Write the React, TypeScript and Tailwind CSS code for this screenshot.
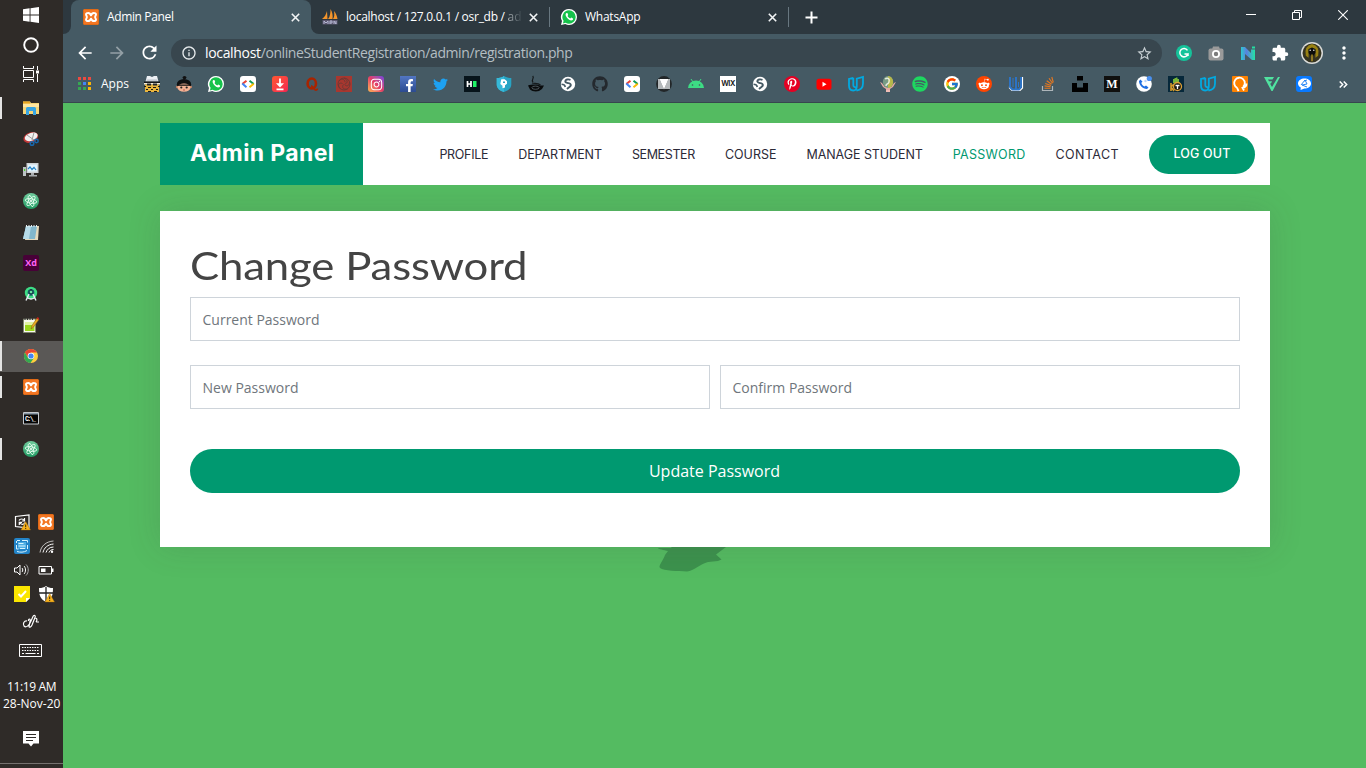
import React, { useLayoutEffect, useRef, useState } from "react";
import {
  FaWhatsapp, FaInstagram, FaFacebookF, FaTwitter, FaGithub,
  FaPinterestP, FaSpotify, FaRedditAlien,
} from "react-icons/fa";
import { FcGoogle } from "react-icons/fc";
import { MdArrowBack, MdArrowForward, MdRefresh, MdInfoOutline, MdStarBorder, MdExtension, MdMoreVert } from "react-icons/md";

/* One line of text whose tracking is adjusted so that it fills a given width. */
function Line({ w, className = "", children }: { w: number; className?: string; children: string }) {
  const ref = useRef<HTMLSpanElement>(null);
  const [spacing, setSpacing] = useState(0);
  useLayoutEffect(() => {
    const el = ref.current;
    if (!el) return;
    el.style.letterSpacing = "0px";
    const natural = el.offsetWidth;
    const next = (w - natural) / children.length;
    el.style.letterSpacing = next + "px";
    setSpacing(next);
  }, [w, children]);
  return (
    <span ref={ref} className={"inline-block shrink-0 whitespace-pre " + className} style={{ letterSpacing: spacing }}>
      {children}
    </span>
  );
}

const ui = "font-['Open_Sans','Noto_Sans',sans-serif]";
const brand = "font-['Inter','Open_Sans',sans-serif]";

function Svg({ children, s = 16 }: { children: React.ReactNode; s?: number }) {
  return <svg width={s} height={s} viewBox="0 0 16 16" className="block shrink-0 overflow-visible">{children}</svg>;
}

function Tile({ className, children }: { className: string; children?: React.ReactNode }) {
  return <span className={"flex h-4 w-4 shrink-0 items-center justify-center overflow-hidden " + className}>{children}</span>;
}

const Xampp = () => (
  <Tile className="rounded-[2px] bg-[#f37623] text-white"><Svg>
    <rect x=".5" y=".5" width="15" height="15" rx="1" fill="none" stroke="#e06a16" />
    <path d="M8 6.300C7.300 4.300 6 3.800 4.800 3.900 3 4 2.600 5.500 3.500 6.800c.5.8.5 1.600 0 2.400C2.600 10.500 3 12 4.800 12.100 6 12.200 7.300 11.700 8 9.700c.7 2 2 2.500 3.200 2.400 1.800-.1 2.200-1.600 1.300-2.900-.5-.8-.5-1.600 0-2.400.9-1.300.5-2.800-1.300-2.900C10 3.800 8.700 4.300 8 6.300z" fill="none" stroke="currentColor" strokeWidth="2" strokeLinejoin="round" />
  </Svg></Tile>
);

const WhatsApp = () => (
  <span className="relative block h-4 w-4">
    <Svg>
      <path d="M8 0a8 8 0 0 1 0 16 8 8 0 0 1-3.700-.9L0 16l1-4A8 8 0 0 1 8 0z" fill="#fff" />
      <path d="M8 1.300a6.700 6.700 0 0 1 0 13.400 6.700 6.700 0 0 1-3.400-.9l-2.700.6.7-2.600A6.700 6.700 0 0 1 8 1.300z" fill="#16c24b" />
      <path d="M5.500 4c-1.300.6-1.200 2.500.3 4.400 1.700 2.200 4 3.500 5.300 2.900 1-.5 1.200-1.700.9-1.900l-1.800-.9-.9 1c-1.200-.4-2.200-1.300-2.800-2.500l.7-1L6.400 4z" fill="#fff" />
    </Svg>
  </span>
);

const Code = () => (
  <Tile className="rounded-[3px] bg-white"><Svg>
    <path d="M6.500 4.700 2.300 8" stroke="#ea4335" strokeWidth="2" /><path d="M2.300 7.500l4.200 3.700" stroke="#4285f4" strokeWidth="2" />
    <path d="M9.500 4.700 13.700 8" stroke="#0f9d58" strokeWidth="2" /><path d="M13.700 7.700 9.500 11.200" stroke="#fbbc05" strokeWidth="2" />
  </Svg></Tile>
);

const Globe = () => (
  <Svg>
    <circle cx="8" cy="8" r="7.200" fill="#fff" />
    <path d="M10.500 3.800C8 2.800 5.500 3.500 5.300 5.200c-.1 1.300 1.700 1.600 3.200 2 1.800.5 2.700 1.300 2.200 2.500-.5 1.300-2.200 1.800-3.700 3.300" stroke="#455a64" strokeWidth="1.900" fill="none" />
    <path d="M1.500 8.300c2 0 3.500 1 3.800 2.700" stroke="#455a64" strokeWidth="1.500" fill="none" />
  </Svg>
);

const Atom = () => (
  <Svg>
    <defs><linearGradient id="atomg" x2="0" y2="1"><stop stopColor="#71cb9d" /><stop offset="1" stopColor="#219b63" /></linearGradient></defs>
    <circle cx="8" cy="8" r="8" fill="url(#atomg)" />
    <g fill="none" stroke="#e6fff0" strokeWidth=".9">
      <ellipse cx="8" cy="8" rx="2.200" ry="5.800" transform="rotate(-20 8 8)" />
      <ellipse cx="8" cy="8" rx="2.200" ry="5.800" transform="rotate(40 8 8)" />
      <ellipse cx="8" cy="8" rx="2.200" ry="5.800" transform="rotate(100 8 8)" />
    </g>
    <circle cx="8" cy="8" r="1" fill="#fff" />
  </Svg>
);

const Udacity = () => (
  <Svg>
    <path d="M5.300 1.800 1 3v6.500c0 3 1.700 5 4.200 5s3.600-2 3.600-4.500V2.700L15 1v6.500c0 4-2.500 6.500-6.500 7M5.300 1.800V9c0 1.600 1 2.500 3.200 2.300" fill="none" stroke="#02a9e0" strokeWidth="1.800" />
  </Svg>
);

const bookmarks: React.ReactNode[] = [
  <Svg><path d="M3 0h3l2 1 2-1h3l1.500 5.500h-13z" fill="#edf0f4" /><path d="M2.500 3.500h11v1.300h-11z" fill="#b9c0c8" /><path d="M0 5.500h16V7H0z" fill="#16181a" /><path d="M0 7h16v1.500H0z" fill="#f2ead8" /><path d="M1 8.500h14V16H1z" fill="#e9b53c" /><path d="M3 7.500h4v2H3zM9 7.500h4v2H9z" fill="#22262b" /><path d="M0 10h2v1H0zM4 11h3v1H4zM9 11h3v1H9zM14 10h2v1h-2zM2 13h2v1H2zM7 13h2v1H7zM12 13h2v1h-2zM4 15h3v1H4zM10 15h3v1h-3z" fill="#1c1a18" /></Svg>,
  <Svg><ellipse cx="8.500" cy="1.600" rx="1.900" ry="1.600" fill="#111" /><ellipse cx="8" cy="8.500" rx="7.200" ry="5.500" fill="#0f1011" /><circle cx="1.300" cy="11" r="1.300" fill="#c58263" /><circle cx="14.700" cy="11" r="1.300" fill="#c58263" /><ellipse cx="8" cy="11.700" rx="6.500" ry="4.100" fill="#f3b293" /><path d="M1 8.500h14v1.300H1z" fill="#131313" /><circle cx="5.300" cy="11.500" r="1.100" fill="#222" /><circle cx="10.700" cy="11.500" r="1.100" fill="#222" /><path d="M7 14h2" stroke="#a44" strokeWidth=".8" /></Svg>,
  <WhatsApp />,
  <Code />,
  <Tile className="rounded-[3px] bg-linear-to-br from-[#ff5630] to-[#f4224f]"><Svg><path d="M8 2.500v6M4.500 13.300h7" stroke="#fff" strokeWidth="1.800" /><path d="M4 7.200h8L8 11.500z" fill="#fff" /></Svg></Tile>,
  <Svg><ellipse cx="7.800" cy="7.500" rx="4.200" ry="5" fill="none" stroke="#a82400" strokeWidth="2.600" /><path d="M7 10c2.500 0 3 4 5 4 1 0 1.300-.6 1.400-1.500" stroke="#a82400" strokeWidth="1.900" fill="none" /></Svg>,
  <Tile className="bg-[#a8372f]"><Svg><g fill="none" stroke="#6e3935"><circle cx="8" cy="8" r="6" /><path d="M8 2c4 2 4 5 1 6M13.500 6c0 4-3 5-5 2.500M11.500 13C7 14 5.500 11 7.500 8.500M4 12.500C1 9 3 6 6.500 7.500M3 5c2-3 6-2 6 1.200" /></g></Svg></Tile>,
  <Tile className="rounded-[3px] bg-linear-to-tr from-[#fdb54b] via-[#e43b66] to-[#7539df] text-white"><FaInstagram size={13} /></Tile>,
  <Tile className="bg-linear-to-b from-[#5276c2] to-[#2c4b91] text-white"><FaFacebookF size={13} className="ml-[3px] mt-[3px]" /></Tile>,
  <FaTwitter size={15} className="text-[#1da1f2]" />,
  <Tile className="bg-[#07141b]"><Svg><path d="M3.500 5v6M7 5v6M3.500 8H7" stroke="#fff" strokeWidth="1.700" /><path d="M9 5h3.500v6H9z" fill="#1ff467" /></Svg></Tile>,
  <Svg><path d="M8 0c2 1.400 4.500 2 7.300 2v6.500c0 4-3.500 6.500-7.300 7.500-3.800-1-7.300-3.500-7.300-7.500V2C3.500 2 6 1.400 8 0z" fill="#28a4c4" /><path d="M8 0v16c-3.800-1-7.300-3.500-7.300-7.500V2C3.500 2 6 1.400 8 0z" fill="#36b8d8" /><path d="M5.300 3.300h3.400l2.300 2v2.500L9 9.300v2.200l-2.500.7V9.800L4.300 8z" fill="#fff" /><path d="M7 5.500h2v1.500H7z" fill="#28a4c4" /></Svg>,
  <Svg><path d="M4.700 0C7 2.500 2.500 3.500 5 6M4 7c3 .7 6 0 8.500 2" stroke="#15191b" strokeWidth="1.200" fill="none" /><path d="M0 9.500c3-1 9-1.500 12 0h4l-2 3.500-3 2c-3 1-7 .5-9-1.500z" fill="#090b0c" /><ellipse cx="7.500" cy="11.700" rx="3.600" ry="1.600" fill="none" stroke="#59666c" strokeWidth=".8" /></Svg>,
  <Globe />,
  <FaGithub size={16} className="text-[#24292e]" />,
  <Code />,
  <Svg><circle cx="8" cy="8" r="7.900" fill="#222628" /><path d="M2 3h12v10H2z" fill="#8f9496" /><path d="M3.500 3h9L8 13.500z" fill="#fff" /><path d="M2 3h1.500L8 13H2zM14 3v10H8l4.500-10z" fill="#b5b9bb" /></Svg>,
  <Svg><path d="M0 12a8 7.500 0 0 1 16 0z" fill="#3ddc84" /><path d="M3 3l2 3M13 3l-2 3" stroke="#3ddc84" /><circle cx="4.500" cy="9" r=".8" fill="#43545d" /><circle cx="11.500" cy="9" r=".8" fill="#43545d" /></Svg>,
  <Tile className={"bg-white text-[7.5px] font-semibold tracking-[-.5px] text-[#111] " + brand}>WIX</Tile>,
  <Globe />,
  <Tile className="rounded-full bg-[#e60023] text-white"><FaPinterestP size={12} /></Tile>,
  <Svg><rect x=".5" y="2.700" width="15" height="11" rx="2.500" fill="#f00" /><path d="M6.500 5.700v5L10.500 8.200z" fill="#fff" /></Svg>,
  <Udacity />,
  <Svg><path d="M0 6l3 5 3 2v3h4v-3l3-2 3-5-2 1-3 4H5L2 7z" fill="#e8aaa4" /><ellipse cx="8" cy="6" rx="5.200" ry="6" fill="#789b85" /><path d="M8 0a5.200 6 0 0 1 0 12z" fill="#b7b84b" /><path d="M5 3c3-2 5 0 4 3s-3 1-3 4" stroke="#e6eadc" strokeWidth="1.500" fill="none" /><path d="M6 14h4v2H6z" fill="#f0bdb6" /></Svg>,
  <FaSpotify size={16} className="text-[#1ed760]" />,
  <Tile className="rounded-full bg-white"><FcGoogle size={14} /></Tile>,
  <Tile className="rounded-full bg-[#ff4500] text-white"><FaRedditAlien size={12} /></Tile>,
  <Svg><path d="M1.500 10.500v1.500l2.500 2.500h8l2.500-2.500V1" fill="none" stroke="#fff" strokeWidth="1.200" /><path d="M2 1v10l2.500 2.500H8V1M8 13.500h3l2-2.500V1" fill="none" stroke="#2c75c9" strokeWidth="1.900" /><path d="M5 2v9M10.500 6v5" stroke="#2c75c9" /></Svg>,
  <Svg><path d="M2.500 10v4.500h10V10" stroke="#aeb6ba" strokeWidth="1.200" fill="none" /><path d="M4.500 12.200h6M4.600 9.900l6 .8M5.300 7.400l5.700 2M6.700 4.700l4.900 3.600M9 2.300l3.500 5M11.800 1l1.500 5.500" stroke="#e8781e" strokeWidth="1.100" /></Svg>,
  <Svg><path d="M5 0h6v4.500H5zM0 7h5v4.500h6V7h5v9H0z" fill="#000" /></Svg>,
  <Tile className="bg-[#10100f] font-['Liberation_Serif',serif] text-[12px] font-bold text-white">M</Tile>,
  <Svg><circle cx="8" cy="8" r="7.800" fill="#fff" /><path d="M4.500 3.500 3 5c0 4 3.500 8 8 8l1.500-1.500-2.500-2-1.500 1C6.500 9.500 5.500 8 5.300 6.700l1.200-1z" fill="#1e6fe3" /><circle cx="13.300" cy="2.500" r="2.600" fill="#4a90ef" /><circle cx="9.500" cy="5" r="1.200" fill="#b8d3f8" /></Svg>,
  <Tile className="bg-[#06283a]"><Svg><path d="M5 6V3h1.500V2H8V1.500h1.500V3H11v4H5z" fill="#76b43a" /><path d="M3 7v8M3 11l3-3M3 11l3 4" stroke="#d69a28" strokeWidth="1.600" /><circle cx="9.500" cy="10.500" r="4" fill="#161512" stroke="#dfa338" strokeWidth="1.300" /><path d="M7.500 9.500h4M9.500 9.500v3.500" stroke="#fff" strokeWidth="1.300" /></Svg></Tile>,
  <Udacity />,
  <Tile className="rounded-[1px] bg-[#ff8200]"><Svg><path d="M5 11.700A5.300 5.300 0 1 1 11 11M5 11.700l1.500 3.500M14.500 7.500c0 3-1.500 4-4 4.500l1.500 2.500" stroke="#fff" strokeWidth="1.800" fill="none" /></Svg></Tile>,
  <Svg><path d="M0 1h10L8.500 3.500H4L5 5.300h3L7 7.500H6L8 11 14 1h2L8.600 15H7.500z" fill="#50e3a0" /></Svg>,
  <Tile className="rounded-[3px] bg-[#0879ff]"><Svg><path d="M2 7.500C2 4.500 5 2.500 8.500 2.500S15 4.500 15 7.500s-3 5-6.500 5L4.500 14l.3-2.500C3 10.500 2 9 2 7.500z" fill="#fff" /><path d="M5 9l4-5 2 4-5 1 5 2M8 5l3-1" stroke="#2585f5" fill="none" /></Svg></Tile>,
];

const Warn = () => <path d="M11.700 7.500 16.500 16H7z" fill="#f8b21c" stroke="#9e6809" strokeWidth=".4" />;

const apps: { icon: React.ReactNode; open?: boolean; active?: boolean }[] = [
  { open: true, icon: <Svg><path d="M0 1.500h7l1 1.500h8v11H0z" fill="#f6d678" /><path d="M0 1.500h7v2H0z" fill="#e9a622" /><path d="M0 4h16v3H0z" fill="#ffe7a1" /><path d="M3 8.500Q3 7 4.500 7h7Q13 7 13 8.500V15h-3v-4H6v4H3z" fill="#38a5e2" /></Svg> },
  { icon: <Svg><ellipse cx="7.800" cy="6.500" rx="7.700" ry="5" transform="rotate(-20 7.800 6.500)" fill="#c03838" /><ellipse cx="8.200" cy="5.800" rx="6.700" ry="3.900" transform="rotate(-20 8.200 5.800)" fill="#f1f1f1" /><path d="M4 4l7 5M11 1.500 9 9" stroke="#9b9b9b" /><circle cx="9" cy="12.500" r="1.800" fill="none" stroke="#1767ad" strokeWidth="1.500" /><circle cx="13.500" cy="10" r="1.700" fill="none" stroke="#1767ad" strokeWidth="1.500" /></Svg> },
  { icon: <Svg><path d="M3.500 1h12v10h-12z" fill="#cfd3d6" /><path d="M5 2.500h9v7H5z" fill="#e3f4ff" /><path d="M5 7l2-2 2 2.500 2-2L13 8" stroke="#2482c4" fill="none" strokeWidth="1.200" /><path d="M8 11h3v2h3v1.500H6V13h2z" fill="#a9adb0" /><path d="M0 5h3v9H0z" fill="#bcc2c4" /><path d="M1 7h1.200v2H1z" fill="#48d527" /></Svg> },
  { icon: <Atom /> },
  { icon: <Svg><path d="M4 2h12l-1 14H2z" fill="#e5d9bb" /><path d="M3 2h11l-2 13H0z" fill="#82b7cb" /><path d="M3 2h5L6 15H0z" fill="#b6dbe8" /><path d="M3.500 1v2M6 1v2M8.500 1v2M11 1v2M13.500 1v2" stroke="#e6edf0" /></Svg> },
  { icon: <Tile className={"rounded-[2px] bg-[#470137] text-[9px] font-bold text-[#ff61f6] " + ui}>Xd</Tile> },
  { icon: <Svg><circle cx="8" cy="7" r="6.200" fill="#3ddc84" /><circle cx="8" cy="6.500" r="3.300" fill="#165564" /><path d="M7 3h2l1 5H6z" fill="#173c46" /><circle cx="8" cy="6" r="1.300" fill="#67e2a1" /><path d="M6 8 3 14.500M10 8l3 6.500M5 12q3 2 6 0" stroke="#e6eff3" strokeWidth="1.400" fill="none" /></Svg> },
  { icon: <Svg><path d="M.5 2h12v13.500H.5z" fill="#f8faf0" stroke="#81856e" /><path d="M2 7h9.500v7H2z" fill="#9bd51c" /><path d="M2 5h10v3H2z" fill="#e2f4a2" /><path d="M2 1v2M4.500 1v2M7 1v2M9.500 1v2" stroke="#333" /><path d="M8 12l1-3.500L14 1l2 1.500-5.500 7.500z" fill="#e9ac24" stroke="#7c5515" strokeWidth=".5" /><path d="M13.500 1.700 16 3V1l-1.500-1z" fill="#bd2420" /></Svg> },
  { active: true, icon: <Svg><circle cx="8" cy="8" r="7" fill="#ffcf3e" /><path d="M1.900 4.500A7 7 0 0 1 14 4.500H8L5 9.700z" fill="#e84435" /><path d="M1.900 4.500A7 7 0 0 0 7.500 15L11 9.700H5z" fill="#34a853" /><circle cx="8" cy="8" r="3.300" fill="#fff" /><circle cx="8" cy="8" r="2.600" fill="#4285f4" /></Svg> },
  { open: true, icon: <Xampp /> },
  { icon: <Svg><path d="M.5 2.500h15v11.500H.5z" fill="#050505" stroke="#c5c9cd" /><path d="M1 3h14v1.500H1z" fill="#8797a5" /><text x="2" y="11.300" fontSize="6.500" fontFamily="Liberation Mono" fontWeight="bold" fill="#fff" textLength="11">C:\_</text></Svg> },
  { open: true, icon: <Atom /> },
];

function Close() {
  return <svg width="9" height="9" viewBox="0 0 9 9" className="shrink-0"><path d="M.8.8l7.400 7.400M8.200.8.8 8.200" stroke="#f3f5f6" strokeWidth="1.600" /></svg>;
}

function Taskbar() {
  return (
    <aside className={"flex h-full w-[63px] shrink-0 flex-col bg-[#2f2b28] text-white " + ui}>
      <div className="flex h-[30px] items-center pl-[23px]"><Svg><path d="M0 2.200 6.600 1.300V7.600H0zM7.500 1.200 16 0v7.600H7.500zM0 8.500h6.600v6.200L0 13.800zM7.500 8.500H16V16l-8.500-1.200z" fill="#fff" /></Svg></div>
      <div className="flex h-[30px] items-center pl-[23px]"><Svg><circle cx="8" cy="8" r="6.800" fill="none" stroke="#fff" strokeWidth="1.900" /></Svg></div>
      <div className="flex h-[28px] items-center pl-[23px]"><Svg><path d="M.5 0v2.500h10V0M.5 16v-2.500h10V16M.5 4.500h10v7H.5zM14.500 0v4M14.500 8v8" fill="none" stroke="#fff" /><path d="M13 4.500h3v3h-3z" fill="#fff" /></Svg></div>
      <div className="mt-[5px] flex flex-col">
        {apps.map((a, i) => (
          <div key={i} className={"flex h-[31px] items-center pb-px " + (a.active ? "bg-[#5a5856]" : "")}>
            <span className={"w-0.5 " + (a.active ? "h-[30px] bg-[#e4e4e3]" : a.open ? "h-[22px] bg-[#e4e4e3]" : "h-[22px]")} />
            <span className="ml-[21px]">{a.icon}</span>
          </div>
        ))}
      </div>
      <div className="mt-[45px] grid grid-cols-[16px_16px] gap-x-2 pl-[14px]">
        <div className="flex h-6 items-center"><Svg><path d="M1.500 2.500 15 1v13L1.500 12.500z" fill="none" stroke="#fff" strokeWidth="1.200" /><path d="M5 6.500c1-2 4-2 5.500 0M10.500 4v3H8M11 8.500c-1 2.500-4 2.500-5.500 0M5.300 11V8.300H8" fill="none" stroke="#fff" strokeWidth="1.200" /><Warn /><path d="M11.700 10.500v2.700M11.700 14v1" stroke="#3b2a08" /></Svg></div>
        <div className="flex h-6 items-center"><Xampp /></div>
        <div className="flex h-6 items-center"><Svg><rect width="16" height="16" rx="2" fill="#2384c8" /><path d="M4 4h8v7H4z" fill="#4eaee4" /><path d="M3 2.500h3M2.500 5V3M8 2.500h5.500v2M2.500 7v4h2M13.500 7v4M4.500 5.500h5M4.500 8h7M6 10.500h5M3 13.500c3 1 7 1 10-1" stroke="#d9f4ff" fill="none" /></Svg></div>
        <div className="flex h-6 items-center"><Svg><g fill="none" stroke="#fff"><path d="M2 14.500C3 8 8 3.500 15.500 3" opacity=".7" /><path d="M5 14.500C6 10 9.500 6.500 15.500 6M8 14.500c1-3 3.500-5.500 7.500-5.500M11 14.500c.5-1.500 2-3 4.500-3" /></g><circle cx="14" cy="13.800" r="1.200" fill="#fff" /></Svg></div>
        <div className="flex h-6 items-center"><Svg><g fill="none" stroke="#fff"><path d="M.5 6H3l3-3v10L3 10H.5zM8 6c1 1 1 3 0 4M10 4c2 2 2 6 0 8" /><path d="M12 2.500c3 3 3 8 0 11" stroke="#aaa" /></g></Svg></div>
        <div className="flex h-6 items-center"><Svg><path d="M1 4.500h12.500v7.500H1z" fill="none" stroke="#fff" /><path d="M3 6.500h4.500V10H3zM14 6.500h1.500V10H14z" fill="#fff" /></Svg></div>
        <div className="flex h-6 items-center"><Svg><path d="M0 0h16v12l-4 4H0z" fill="#fbe600" /><path d="M12 16v-4h4z" fill="#fff" /><path d="M4.500 8l2.500 2.500L12 5" stroke="#fff" strokeWidth="2" fill="none" /></Svg></div>
        <div className="flex h-6 items-center"><Svg><path d="M8 0c2 1.500 4 2 7 2 0 7-1 11-7 14C2 13 1 9 1 2c3 0 5-.5 7-2z" fill="#fff" /><path d="M8 1v14M1 7h14" stroke="#222" strokeWidth="1.300" /><Warn /><path d="M11.700 10.500v2.700M11.700 14v1" stroke="#3b2a08" /></Svg></div>
      </div>
      <div className="mt-[7px] flex h-[17px] items-center pl-[23px]"><Svg><path d="M4 7C1 6.500-.5 10 1 12c2 2 5 0 7-5l2-4.500c1-2 3-1 2 1L9 11c-1 2-2.500 3-3 1.500l1-5C8 4 5 4.500 5.500 7M12.500 4.500c1.500-.5 2 1.500.5 3.500M13 8h3" stroke="#fff" fill="none" strokeWidth="1.200" /></Svg></div>
      <div className="mt-[14px] flex h-[13px] items-center pl-[19px]">
        <svg width="23" height="13" viewBox="0 0 23 13"><path d="M.5.5h22v12H.5z" fill="none" stroke="#fff" /><path d="M3 3.500h17M3 6.500h17" stroke="#fff" strokeDasharray="1.500 1" /><path d="M3 9.500h2M6.500 9.500h10M18 9.500h2" stroke="#fff" /></svg>
      </div>
      <div className="mt-[21px] flex h-[17px] items-center pl-[7px] text-[12px] leading-[17px]"><Line w={49}>11:19 AM</Line></div>
      <div className="flex h-[17px] items-center pl-[3px] text-[12px] leading-[17px]"><Line w={57}>28-Nov-20</Line></div>
      <div className="mt-[19px] flex pl-[23px]"><Svg><path d="M0 0h16v12.500h-5.500L8 15.500 5.500 12.500H0z" fill="#fff" /><path d="M3 3.500h10M3 6.500h10M3 9.500h7" stroke="#2f2b28" /></Svg></div>
      <div className="mt-auto mb-1 h-px bg-[#75716f]" />
    </aside>
  );
}

function Browser() {
  return (
    <header className={"flex h-[103px] shrink-0 flex-col border-b border-[#37464e] bg-[#455a64] text-white " + ui}>
      <div className="flex h-[34px] bg-[#2d383f]">
        <div className="flex w-2 shrink-0 items-end bg-[#455a64]"><div className="h-[34px] w-2 rounded-br-lg bg-[#2d383f]" /></div>
        <div className="flex w-60 shrink-0 items-center rounded-t-lg bg-[#455a64] pl-3">
          <Xampp />
          <Line w={67} className="ml-2 text-[12px]">Admin Panel</Line>
          <span className="ml-auto mr-[11px]"><Close /></span>
        </div>
        <div className="flex flex-1 bg-[#455a64]">
          <div className="flex flex-1 items-center rounded-bl-lg bg-[#2d383f]">
            <span className="ml-[11px]"><Svg>
              <path d="M5 2 5.500 10H0C3 8 4 5 5 2zM8.500 0c2 3 2.500 7 2 10H6c2-2 2.500-6 2.500-10zM12 2c2 2 3 5 3.500 8H11c1.500-2 1.500-5 1-8z" fill="#f4952b" />
              <path d="M.5 11h15v4.500H.5z" fill="#5d5870" /><path d="M2 15v-3l2 2 2-2v3M8 15v-3h2v2H8M12 15v-3l2 3v-3" stroke="#b4b7d2" fill="none" />
            </Svg></span>
            <span className="ml-2 flex w-[175px] text-[12px]"><Line w={162}>localhost / 127.0.0.1 / osr_db / </Line><span className="bg-linear-to-r from-[#b4b9bc] to-[#37434a] bg-clip-text text-transparent">ad</span></span>
            <span className="ml-2"><Close /></span>
            <span className="ml-[11px] h-5 w-px bg-[#687780]" />
            <span className="ml-[11px]"><WhatsApp /></span>
            <Line w={55} className="ml-2 text-[12px]">WhatsApp</Line>
            <span className="ml-[128px]"><Close /></span>
            <span className="ml-[11px] h-5 w-px bg-[#687780]" />
            <svg className="ml-4" width="13" height="13" viewBox="0 0 13 13"><path d="M6.500 .5v12M.5 6.500h12" stroke="#fff" strokeWidth="2" /></svg>
            <div className="mb-[5px] ml-auto flex items-center">
              <span className="h-px w-2.5 bg-white" />
              <svg className="ml-[36px]" width="10" height="10" viewBox="0 0 10 10"><path d="M.5 2.500h7v7h-7zM2.500 2.500v-2h7v7h-2" fill="none" stroke="#fff" /></svg>
              <svg className="ml-[36px] mr-[18px]" width="10" height="10" viewBox="0 0 10 10"><path d="M.2.2l9.600 9.600M9.800.2.2 9.800" stroke="#fff" strokeWidth="1.100" /></svg>
            </div>
          </div>
        </div>
      </div>
      <div className="flex h-9 items-center pt-px">
        <MdArrowBack size={20} className="ml-3 text-white" />
        <MdArrowForward size={20} className="ml-3 text-[#94a0a6]" />
        <MdRefresh size={21} className="ml-3 text-white" />
        <div className="ml-[11px] mt-px flex h-7 w-[991px] items-center rounded-full bg-[#38464e] pl-2.5">
          <MdInfoOutline size={16} className="text-[#e6eaec]" />
          <span className="ml-2 flex text-[14px] leading-5"><Line w={56}>localhost</Line><Line w={312} className="text-[#b4bec3]">/onlineStudentRegistration/admin/registration.php</Line></span>
          <MdStarBorder size={17} className="ml-auto mr-[9px] text-[#c6ced2]" />
        </div>
        <Tile className="ml-[14px] rounded-full bg-[#15c39a] text-white"><Svg><path d="M11.500 5.300A4.200 4.200 0 1 0 12 9H8.500M12 8.500V11" stroke="#fff" strokeWidth="1.500" fill="none" /></Svg></Tile>
        <span className="ml-4"><Svg><rect x=".5" y="3.500" width="15" height="12" rx="2" fill="#9a9a9a" /><path d="M5 1.500h6l1 3H4z" fill="#9a9a9a" /><circle cx="8" cy="9" r="3.100" fill="#7c7c7c" stroke="#fff" strokeWidth="1.800" /></Svg></span>
        <span className="ml-4"><Svg><defs><linearGradient id="nn" x2="1"><stop stopColor="#2dc9ce" /><stop offset=".4" stopColor="#5a80e0" /><stop offset="1" stopColor="#24e4a4" /></linearGradient></defs><path d="M1 15V2h4l6 6V4.500h4V15h-3L5 9v6z" fill="url(#nn)" /><path d="M12 1.500h3v2h-3z" fill="#25dda2" /></Svg></span>
        <MdExtension size={18} className="ml-[15px] text-white" />
        <span className="ml-[12px]"><Svg s={22}><circle cx="8" cy="8" r="8" fill="#dadbd8" /><circle cx="8" cy="8" r="6.900" fill="#353320" /><path d="M3.500 10Q2 3 8 1.500 14 3 12.500 10L10.500 11.500V5.500h-5v6z" fill="#988112" /><path d="M5.500 5 8 4l2.500 1v3L8 11 5.500 8z" fill="#0b0c0b" /><path d="M8 9v5" stroke="#b89926" /><circle cx="6.700" cy="6" r=".6" fill="#ddd" /><circle cx="9.300" cy="6" r=".6" fill="#ddd" /></Svg></span>
        <MdMoreVert size={20} className="ml-[11px] text-white" />
      </div>
      <div className="flex h-7 items-center">
        <svg className="ml-[15px]" width="13" height="14" viewBox="0 0 13 14">
          <path d="M0 0h3v3H0zM5 0h3v3H5zM10 0h3v3h-3z" fill="#ee4a3f" /><path d="M0 5h3v3H0z" fill="#36a852" /><path d="M5 5h3v3H5z" fill="#4285f4" /><path d="M10 5h3v3h-3z" fill="#fbb506" /><path d="M0 10h3v3H0zM5 10h3v3H5z" fill="#36a852" /><path d="M10 10h3v3h-3z" fill="#fbb506" />
        </svg>
        <Line w={28} className="ml-2.5 text-[12px]">Apps</Line>
        <div className="ml-[15px] flex gap-4">
          {bookmarks.map((b, i) => <span key={i} className="flex h-4 w-4 items-center justify-center">{b}</span>)}
        </div>
        <svg className="ml-auto mr-[18px]" width="9" height="7" viewBox="0 0 9 7"><path d="M.7.5l3 3-3 3M4.700.5l3 3-3 3" stroke="#fff" strokeWidth="1.500" fill="none" /></svg>
      </div>
    </header>
  );
}

const nav: [string, number][] = [["PROFILE", 49], ["DEPARTMENT", 84], ["SEMESTER", 63], ["COURSE", 52], ["MANAGE STUDENT", 116], ["PASSWORD", 73], ["CONTACT", 64]];

function Field({ label, w }: { label: string; w: number }) {
  return <div className={"flex h-11 items-center border border-[#ced4da] bg-white pl-[11.5px] pt-px text-[14px] text-[#6f767c] " + ui}><Line w={w}>{label}</Line></div>;
}

export default function App() {
  return (
    <div className="flex h-[768px] w-[1366px] overflow-hidden">
      <Taskbar />
      <div className="flex min-w-0 flex-1 flex-col">
        <Browser />
        <main className="relative flex-1 bg-[#54bb61] px-[97px] pr-24 pt-5">
          <svg className="absolute left-[593px] top-[441px]" width="75" height="30" viewBox="0 0 75 30">
            <path d="M18 0H72L70 3 60 10.500l5.500 5L62 17l-10 1C44 20 38 27 31 27.500 22 27 8 27 4 24c-2-2 3-7 5-13l3-4C8 6 2 5 2 4L15 4z" fill="#3c924d" />
          </svg>
          <nav className={"flex h-[62px] items-center bg-white text-[12.5px] font-normal text-[#2b2937] " + brand}>
            <div className="flex h-full w-[203px] items-center bg-[#009970] pb-px pl-[30px] text-[23px] font-bold text-white"><Line w={144}>Admin Panel</Line></div>
            <div className="ml-auto flex items-center gap-[30px] pr-[15px]">
              {nav.map(([t, w]) => <Line key={t} w={w} className={"pt-0.5 " + (t === "PASSWORD" ? "text-[#009970]" : "")}>{t}</Line>)}
              <button className="flex h-[39px] w-[106px] items-center justify-center rounded-full bg-[#009970] pt-px font-medium text-white"><Line w={57}>LOG OUT</Line></button>
            </div>
          </nav>
          <section className="relative mt-[26px] h-[336px] bg-white px-[30px] pt-[30px] shadow-[0_0_30px_rgba(64,64,64,.17)]">
            <h1 className="h-14 text-[39px] leading-[48px] text-[#444] font-['Lato','Open_Sans',sans-serif]"><Line w={301} className="origin-left scale-x-[1.12]">Change Password</Line></h1>
            <Field label="Current Password" w={117} />
            <div className="mt-6 grid grid-cols-2 gap-2.5">
              <Field label="New Password" w={96} />
              <Field label="Confirm Password" w={120} />
            </div>
            <button className={"mt-10 flex h-11 w-full items-center justify-center rounded-full bg-[#009970] pr-px text-[16px] text-white " + ui}><Line w={131}>Update Password</Line></button>
          </section>
        </main>
      </div>
    </div>
  );
}
